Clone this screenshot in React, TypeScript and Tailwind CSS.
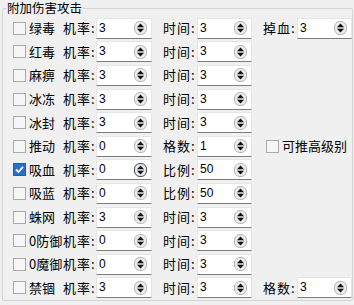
import React from "react";

interface Row {
  name: string;
  rate: string;
  l2: string;
  v2: string;
  l3?: string;
  v3?: string;
  checked?: boolean;
  hover?: boolean;
  extra?: string;
}

const rows: Row[] = [
  { name: "绿毒", rate: "3", l2: "时间:", v2: "3", l3: "掉血:", v3: "3" },
  { name: "红毒", rate: "3", l2: "时间:", v2: "3" },
  { name: "麻痹", rate: "3", l2: "时间:", v2: "3" },
  { name: "冰冻", rate: "3", l2: "时间:", v2: "3" },
  { name: "冰封", rate: "3", l2: "时间:", v2: "3" },
  { name: "推动", rate: "0", l2: "格数:", v2: "1", extra: "可推高级别" },
  { name: "吸血", rate: "0", l2: "比例:", v2: "50", checked: true, hover: true },
  { name: "吸蓝", rate: "0", l2: "比例:", v2: "50" },
  { name: "蛛网", rate: "3", l2: "时间:", v2: "3" },
  { name: "0防御", rate: "0", l2: "时间:", v2: "3" },
  { name: "0魔御", rate: "0", l2: "时间:", v2: "3" },
  { name: "禁锢", rate: "3", l2: "时间:", v2: "3", l3: "格数:", v3: "3" },
];

const Check = ({ checked }: { checked?: boolean }) =>
  checked ? (
    <span className="w-[13px] h-[13px] shrink-0 bg-[#2a6fc9] border border-[#1d5fb5] flex items-center justify-center">
      <svg width="11" height="11" viewBox="0 0 11 11">
        <path d="M2 5.5 L4.5 8 L9 2.8" fill="none" stroke="#fff" strokeWidth="1.8" />
      </svg>
    </span>
  ) : (
    <span className="w-[13px] h-[13px] shrink-0 bg-[#f6f6f6] border border-[#a9a9a9]" />
  );

// up/down arrows of the spin box
const Spin = ({ hover }: { hover?: boolean }) => (
  <svg width="13" height="14" viewBox="0 0 13 14" className="shrink-0">
    <rect
      x="0.5"
      y="0.5"
      width="12"
      height="13"
      rx="5.5"
      fill={hover ? "#e4ecf5" : "#ececec"}
      stroke={hover ? "#4a4a4a" : "#b5b5b5"}
    />
    <polygon points="3.2,6 9.8,6 6.5,2.6" fill="#111" />
    <line x1="3" y1="7" x2="10" y2="7" stroke="#555" strokeWidth="0.8" />
    <polygon points="3.2,8 9.8,8 6.5,11.4" fill="#111" />
  </svg>
);

const SpinBox = ({ value, width, hover }: { value: string; width: string; hover?: boolean }) => (
  <div
    className={`${width} shrink-0 h-[21px] bg-white border border-[#e6e6e6] border-b-[#7d7d7d] flex items-start justify-between pl-[2px] pr-[4px]`}
  >
    <span className="text-[12px] leading-[14px] pt-[2px] font-['Liberation_Sans',sans-serif]">{value}</span>
    <span className="self-center">
      <Spin hover={hover} />
    </span>
  </div>
);

export default function App() {
  return (
    <div className="w-[354px] h-[305px] bg-[#f0f0f0] px-[2px] font-['Noto_Sans_CJK_SC',sans-serif] text-[13px] text-black">
      <fieldset className="w-[350px] h-[301px] border border-[#d4d4d4] rounded-[2px]">
        <legend className="ml-[3px] px-[1px] leading-[16px] text-[12.5px]">附加伤害攻击</legend>
        <div className="pt-[0.5px] flex flex-col">
          {rows.map((r) => (
            <div key={r.name} className="h-[23.6px] flex items-center pl-[10px] whitespace-nowrap">
              <Check checked={r.checked} />
              <span className="w-[37px] shrink-0 pl-[3px] leading-[14px]">{r.name}</span>
              <span className="w-[33px] shrink-0 leading-[14px] tracking-[1px]">机率:</span>
              <SpinBox value={r.rate} width="w-[56px]" hover={r.hover} />
              <span className="w-[34px] shrink-0 ml-[11px] leading-[14px] tracking-[1px]">{r.l2}</span>
              <SpinBox value={r.v2} width="w-[55px]" />
              {r.l3 && (
                <>
                  <span className="w-[34px] shrink-0 ml-[11px] leading-[14px] tracking-[1px]">{r.l3}</span>
                  <SpinBox value={r.v3 ?? ""} width="w-[55px]" />
                </>
              )}
              {r.extra && (
                <span className="ml-[14px] flex items-center gap-[3px]">
                  <Check />
                  <span className="leading-[14px]">{r.extra}</span>
                </span>
              )}
            </div>
          ))}
        </div>
      </fieldset>
    </div>
  );
}
